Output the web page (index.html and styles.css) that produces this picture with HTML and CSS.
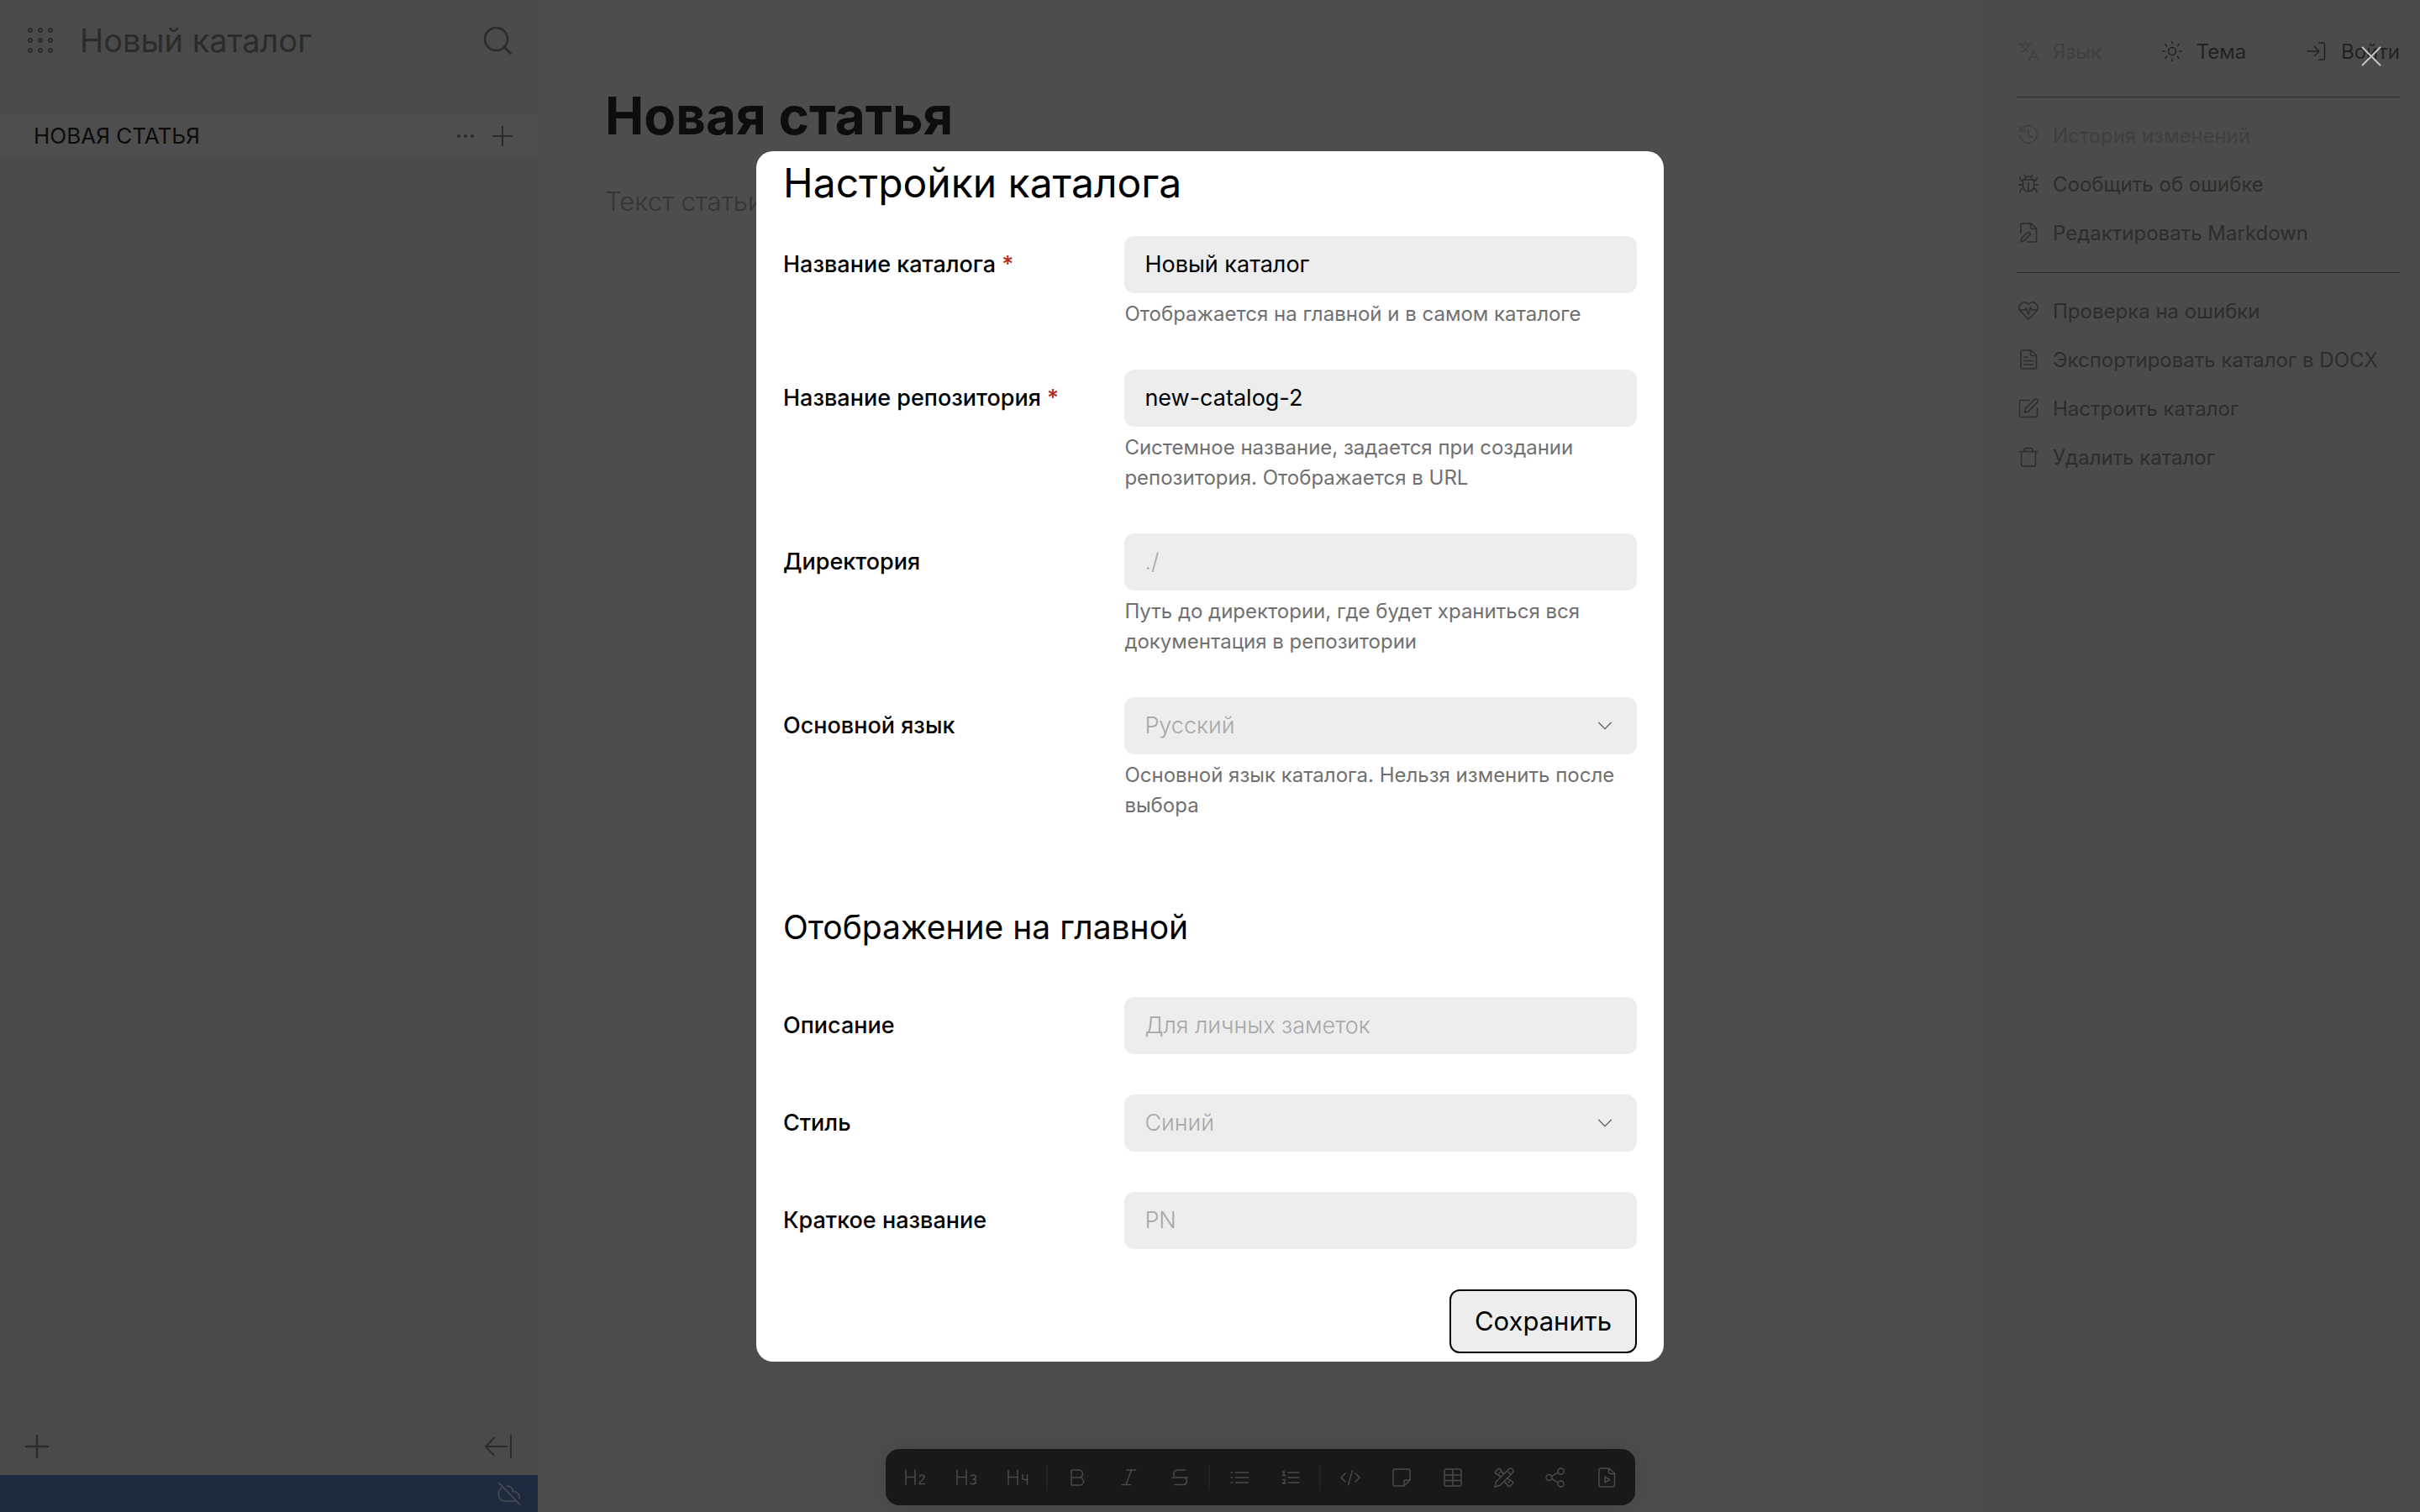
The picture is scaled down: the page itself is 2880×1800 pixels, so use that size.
FILE: index.html
```html
<!DOCTYPE html>
<html lang="ru">
<head>
<meta charset="utf-8">
<title>Новый каталог</title>
<link rel="stylesheet" href="styles.css">
</head>
<body>
<svg class="sprite" aria-hidden="true">
  <symbol id="i-lang" viewBox="0 0 24 24"><path d="M1 3.500h14.500M8 0.500v3M12.500 3.500C11 8 7 11.500 3.500 13M4.500 5c1.500 3 4 5.500 7 7.500M13 23l5.500-12L24 23M15 19h7.500"/></symbol>
  <symbol id="i-sun" viewBox="0 0 24 24"><circle cx="12" cy="12" r="4.500"/><path d="M12 .5v2.500M12 21v2.500M.5 12H3M21 12h2.500M3.900 3.900l1.700 1.700M18.400 18.400l1.700 1.700M3.900 20.100l1.700-1.700M18.400 5.600l1.700-1.700"/></symbol>
  <symbol id="i-login" viewBox="0 0 24 24"><path d="M.5 12H15M9.500 6.500 15 12l-5.500 5.500M14.500 2H20a1.500 1.500 0 0 1 1.500 1.500v17A1.500 1.500 0 0 1 20 22h-5.500"/></symbol>
  <symbol id="i-history" viewBox="0 0 24 24"><path d="M2 1.500v6h6M2.300 7.500A10.300 10.300 0 1 1 1.800 12M12 6.500V12l5 2.500"/></symbol>
  <symbol id="i-bug" viewBox="0 0 24 24"><path d="M5.500 7h13v7.500a6.500 6.500 0 0 1-13 0zM8 7a4 4 0 0 1 8 0M12 10.500V21M9 3.500 7 1M15 3.500 17 1M5.500 13H.5M18.500 13h5M5.500 8.500 3 7.500 1.500 4M18.500 8.500 21 7.500 22.500 4M6 17l-3 1.500L2 22M18 17l3 1.500 1 3.500"/></symbol>
  <symbol id="i-fileedit" viewBox="0 0 24 24"><path d="M3 13V3a2 2 0 0 1 2-2h10l6.500 6v14a2 2 0 0 1-2 2H11M14.500 1v4.500a2 2 0 0 0 2 2h5M3 23l.8-4.500 7-6.500a1.900 1.900 0 0 1 2.800 2.700l-6.500 6.800z"/></symbol>
  <symbol id="i-heart" viewBox="0 0 24 24"><path d="M12 22 2.500 12.500A6.300 6.300 0 0 1 12 4a6.300 6.300 0 0 1 9.500 8.500zM1.500 11H8l1.500-2 2.500 7 2.500-8 1.500 3h6.500"/></symbol>
  <symbol id="i-doc" viewBox="0 0 24 24"><path d="M3 3a2 2 0 0 1 2-2h10l6.500 6v14a2 2 0 0 1-2 2H5a2 2 0 0 1-2-2zM14.500 1v4.500a2 2 0 0 0 2 2h5M7 9h4M7 13.500h10.500M7 18h10.500"/></symbol>
  <symbol id="i-edit" viewBox="0 0 24 24"><path d="M13 2.500H3A1.500 1.500 0 0 0 1.500 4v17A1.500 1.500 0 0 0 3 22.500h18a1.500 1.500 0 0 0 1.500-1.500V12M7.500 17l.7-4.500L19 1.900a2.300 2.300 0 0 1 3.500 3.200L12 16z"/></symbol>
  <symbol id="i-trash" viewBox="0 0 24 24"><path d="M1.500 5.500h21M7 5.500V3.500A2 2 0 0 1 9 1.500h6a2 2 0 0 1 2 2v2M3.500 5.500V21a2 2 0 0 0 2 2h13a2 2 0 0 0 2-2V5.500"/></symbol>
  <symbol id="i-plus" viewBox="0 0 24 24"><path d="M12 .5v23M.5 12h23"/></symbol>
  <symbol id="i-x" viewBox="0 0 24 24"><path d="M1.500 1.500l21 21M22.500 1.500l-21 21"/></symbol>
  <symbol id="i-search" viewBox="0 0 34 34"><circle cx="15.500" cy="15.500" r="13.500"/><path d="M25 25l7.500 7.500"/></symbol>
  <symbol id="i-grid" viewBox="0 0 30 30"><circle cx="3" cy="3" r="2"/><circle cx="15" cy="3" r="2"/><circle cx="27" cy="3" r="2"/><circle cx="3" cy="15" r="2"/><circle cx="15" cy="15" r="2"/><circle cx="27" cy="15" r="2"/><circle cx="3" cy="27" r="2"/><circle cx="15" cy="27" r="2"/><circle cx="27" cy="27" r="2"/></symbol>
  <symbol id="i-dots" viewBox="0 0 24 24"><g class="solid"><circle cx="4" cy="12" r="2"/><circle cx="12" cy="12" r="2"/><circle cx="20" cy="12" r="2"/></g></symbol>
  <symbol id="i-collapse" viewBox="0 0 34 28"><path d="M27 14H2M12 3.500 2 14l10 10.500M32 1.500v25"/></symbol>
  <symbol id="i-cloudoff" viewBox="0 0 28 28"><path d="M1.500 1l25 26M5.500 6.500C2 9 1 13 1.500 16c.5 4 3 7 7 7H22M11.500 5c4 0 6.500 2.500 7 6.500 4 0 7.500 3 7.500 6.500v2"/></symbol>
  <symbol id="i-chev" viewBox="0 0 24 24"><path d="M4 8l8 8 8-8"/></symbol>
  <symbol id="i-h2" viewBox="0 0 26 24"><path d="M2 3v17M13 3v17M2 11.500h11M18.500 10.500q.3-1.500 2.800-1.500 2.700 0 2.700 2.500c0 3-5.500 4-6 8h6.500"/></symbol>
  <symbol id="i-h3" viewBox="0 0 26 24"><path d="M2 3v17M13 3v17M2 11.500h11M18.500 10q.5-1 2.700-1c4 0 3.500 5 0 5 4.500 0 4 5.700 0 5.700q-2.500 0-3.200-1"/></symbol>
  <symbol id="i-h4" viewBox="0 0 26 24"><path d="M2 3v17M13 3v17M2 11.500h11M19 8.500v4a2 2 0 0 0 2 2h4M24.500 8.500V20"/></symbol>
  <symbol id="i-bold" viewBox="0 0 24 24"><path d="M5 3h9a4.500 4.500 0 0 1 0 9H5zM5 12h10a4.500 4.500 0 0 1 0 9H5z"/></symbol>
  <symbol id="i-italic" viewBox="0 0 24 24"><path d="M10 3h10.500M4 20.500h10.500M15.500 3 9 20.500"/></symbol>
  <symbol id="i-strike" viewBox="0 0 24 24"><path d="M18.500 3H9.500a4.500 4.500 0 0 0-4 7M3 12h18.500M6 20.500h9.500a4.300 4.300 0 0 0 3.500-7.500"/></symbol>
  <symbol id="i-ul" viewBox="0 0 24 24"><path d="M7.500 6h15M7.500 12h15M7.500 18h15M2 6h1.500M2 12h1.500M2 18h1.500"/></symbol>
  <symbol id="i-ol" viewBox="0 0 24 24"><path d="M9 6h13M9 12h13M9 18h13M2.500 5.500 4 4.500v5M2.200 9.500h3.500M2.300 14.500q3-1 3 1T2.500 19h3.500"/></symbol>
  <symbol id="i-code" viewBox="0 0 24 24"><path d="M6 7l-5 5 5 5M18 7l5 5-5 5M14.500 3.500 9.500 20.500"/></symbol>
  <symbol id="i-note" viewBox="0 0 24 24"><path d="M15 22H4a2 2 0 0 1-2-2V4a2 2 0 0 1 2-2h16a2 2 0 0 1 2 2v11zM22 15h-5a2 2 0 0 0-2 2v5"/></symbol>
  <symbol id="i-table" viewBox="0 0 24 24"><path d="M4 2h16a2 2 0 0 1 2 2v16a2 2 0 0 1-2 2H4a2 2 0 0 1-2-2V4a2 2 0 0 1 2-2zM2 9h20M2 15.500h20M12 2v20"/></symbol>
  <symbol id="i-tools" viewBox="0 0 24 24"><path d="M1 23l1.500-6L17.500 2a2.900 2.900 0 0 1 4.500 4.500L7 21.500zM15.500 4l4.500 4.500M8.500 11 1.800 7a1.500 1.500 0 0 1 0-2L5 1.800a1.500 1.500 0 0 1 2 0l4.500 6.200M8 5 6 7M15.500 12.500l6.700 4.500a1.500 1.500 0 0 1 0 2L19 22.200a1.500 1.500 0 0 1-2 0L12 16M19.500 15.500l-2.500 2.500"/></symbol>
  <symbol id="i-share" viewBox="0 0 24 24"><circle cx="4.500" cy="12" r="3.500"/><circle cx="18.500" cy="4.500" r="3.500"/><circle cx="18.500" cy="19.500" r="3.500"/><path d="M7.600 10.300l7.800-4.100M7.600 13.700l7.800 4.100"/></symbol>
  <symbol id="i-video" viewBox="0 0 24 24"><path d="M3 3a2 2 0 0 1 2-2h10l6.500 6v14a2 2 0 0 1-2 2H5a2 2 0 0 1-2-2zM14.500 1v4.500a2 2 0 0 0 2 2h5M10 11v7l5.500-3.500z"/></symbol>
</svg>

<div class="app">
  <aside class="catalog">
    <header class="catalog-head">
      <button class="icon-btn" aria-label="Меню"><svg class="ic-grid"><use href="#i-grid"/></svg></button>
      <a class="catalog-name" href="#">Новый каталог</a>
      <button class="icon-btn" aria-label="Поиск"><svg class="ic-search"><use href="#i-search"/></svg></button>
    </header>
    <nav class="tree">
      <a class="tree-link" href="#">НОВАЯ СТАТЬЯ</a>
      <button class="icon-btn" aria-label="Действия"><svg class="ic"><use href="#i-dots"/></svg></button>
      <button class="icon-btn" aria-label="Добавить вложенную статью"><svg class="ic"><use href="#i-plus"/></svg></button>
    </nav>
    <div class="catalog-foot">
      <button class="icon-btn" aria-label="Добавить статью"><svg class="ic-add"><use href="#i-plus"/></svg></button>
      <button class="icon-btn" aria-label="Свернуть панель"><svg class="ic-collapse"><use href="#i-collapse"/></svg></button>
    </div>
    <div class="status"><svg class="ic-cloud"><use href="#i-cloudoff"/></svg></div>
  </aside>

  <main class="article">
    <h1 class="article-title">Новая статья</h1>
    <p class="article-text">Текст статьи</p>
    <div class="toolbar">
      <button class="tool" aria-label="Заголовок 2"><svg class="ic-h"><use href="#i-h2"/></svg></button>
      <button class="tool" aria-label="Заголовок 3"><svg class="ic-h"><use href="#i-h3"/></svg></button>
      <button class="tool" aria-label="Заголовок 4"><svg class="ic-h"><use href="#i-h4"/></svg></button>
      <span class="sep"></span>
      <button class="tool" aria-label="Полужирный"><svg class="ic"><use href="#i-bold"/></svg></button>
      <button class="tool" aria-label="Курсив"><svg class="ic"><use href="#i-italic"/></svg></button>
      <button class="tool" aria-label="Зачёркнутый"><svg class="ic"><use href="#i-strike"/></svg></button>
      <span class="sep"></span>
      <button class="tool" aria-label="Список"><svg class="ic"><use href="#i-ul"/></svg></button>
      <button class="tool" aria-label="Нумерованный список"><svg class="ic"><use href="#i-ol"/></svg></button>
      <span class="sep"></span>
      <button class="tool" aria-label="Код"><svg class="ic"><use href="#i-code"/></svg></button>
      <button class="tool" aria-label="Заметка"><svg class="ic"><use href="#i-note"/></svg></button>
      <button class="tool" aria-label="Таблица"><svg class="ic"><use href="#i-table"/></svg></button>
      <button class="tool" aria-label="Рисунок"><svg class="ic"><use href="#i-tools"/></svg></button>
      <button class="tool" aria-label="Диаграмма"><svg class="ic"><use href="#i-share"/></svg></button>
      <button class="tool" aria-label="Видео"><svg class="ic"><use href="#i-video"/></svg></button>
    </div>
  </main>

  <aside class="side">
    <div class="side-top">
      <button class="side-btn muted"><svg class="ic"><use href="#i-lang"/></svg>Язык</button>
      <button class="side-btn strong"><svg class="ic"><use href="#i-sun"/></svg>Тема</button>
      <button class="side-btn strong"><svg class="ic"><use href="#i-login"/></svg>Войти</button>
    </div>
    <div class="side-group">
      <button class="side-btn muted"><svg class="ic"><use href="#i-history"/></svg>История изменений</button>
      <button class="side-btn"><svg class="ic"><use href="#i-bug"/></svg>Сообщить об ошибке</button>
      <button class="side-btn"><svg class="ic"><use href="#i-fileedit"/></svg>Редактировать Markdown</button>
    </div>
    <div class="side-group">
      <button class="side-btn"><svg class="ic"><use href="#i-heart"/></svg>Проверка на ошибки</button>
      <button class="side-btn"><svg class="ic"><use href="#i-doc"/></svg>Экспортировать каталог в DOCX</button>
      <button class="side-btn"><svg class="ic"><use href="#i-edit"/></svg>Настроить каталог</button>
      <button class="side-btn"><svg class="ic"><use href="#i-trash"/></svg>Удалить каталог</button>
    </div>
  </aside>
</div>

<div class="overlay">
  <button class="close" aria-label="Закрыть"><svg class="ic"><use href="#i-x"/></svg></button>
  <form class="modal" role="dialog" aria-labelledby="modal-title">
    <h2 class="modal-title" id="modal-title">Настройки каталога</h2>
    <div class="fields">
      <div class="row">
        <label class="label" for="title">Название каталога <span class="req">*</span></label>
        <div class="control"><input class="input" id="title" type="text" value="Новый каталог">
          <p class="hint">Отображается на главной и в самом каталоге</p></div>
      </div>
      <div class="row">
        <label class="label" for="repo">Название репозитория <span class="req">*</span></label>
        <div class="control"><input class="input" id="repo" type="text" value="new-catalog-2">
          <p class="hint">Системное название, задается при создании репозитория. Отображается в URL</p></div>
      </div>
      <div class="row">
        <label class="label" for="dir">Директория</label>
        <div class="control"><input class="input" id="dir" type="text" placeholder="./">
          <p class="hint">Путь до директории, где будет храниться вся документация в репозитории</p></div>
      </div>
      <div class="row">
        <label class="label" for="lang">Основной язык</label>
        <div class="control"><div class="select-box"><select class="input select" id="lang" disabled><option>Русский</option></select><svg class="chev"><use href="#i-chev"/></svg></div>
          <p class="hint">Основной язык каталога. Нельзя изменить после выбора</p></div>
      </div>
    </div>
    <h3 class="modal-subtitle">Отображение на главной</h3>
    <div class="fields">
      <div class="row">
        <label class="label" for="desc">Описание</label>
        <div class="control"><input class="input" id="desc" type="text" placeholder="Для личных заметок"></div>
      </div>
      <div class="row">
        <label class="label" for="style">Стиль</label>
        <div class="control"><div class="select-box"><select class="input select" id="style"><option>Синий</option></select><svg class="chev"><use href="#i-chev"/></svg></div></div>
      </div>
      <div class="row">
        <label class="label" for="short">Краткое название</label>
        <div class="control"><input class="input" id="short" type="text" placeholder="PN"></div>
      </div>
    </div>
    <div class="actions"><button class="save" type="button">Сохранить</button></div>
  </form>
</div>
</body>
</html>
```
FILE: styles.css
```css
* { box-sizing: border-box; }

body {
  margin: 0;
  font-family: Inter, "Noto Sans", sans-serif;
  color: #000;
  background: #4d4d4d;
}

h1, h2, h3, p { margin: 0; }
a { color: inherit; text-decoration: none; }

button {
  padding: 0;
  border: 0;
  background: none;
  color: inherit;
  font: inherit;
}

svg {
  display: block;
  flex: none;
  fill: none;
  stroke: currentColor;
  stroke-width: 1.5;
  stroke-linecap: round;
  stroke-linejoin: round;
}

.sprite { display: none; }
.solid { fill: currentColor; stroke: none; }
.ic { width: 24px; height: 24px; }
.icon-btn { display: flex; align-items: center; }

.app {
  display: grid;
  grid-template-columns: 640px 1fr 520px;
  min-height: 100vh;
}

/* Catalog panel */
.catalog {
  display: flex;
  flex-direction: column;
  background: #4a4a4a;
  color: #2b2b2b;
}

.catalog-head {
  display: flex;
  align-items: center;
  height: 96px;
  margin-bottom: 40px;
  padding: 0 31px 0 33px;
}

.catalog-name {
  flex: 1;
  margin-left: 32px;
  font-size: 38px;
}

.ic-grid { width: 30px; height: 30px; stroke-width: 2; }
.ic-search { width: 34px; height: 34px; stroke-width: 2.5; }

.tree {
  display: flex;
  align-items: center;
  gap: 20px;
  height: 51px;
  padding: 0 30px 0 40px;
  background: #4e4e4e;
}

.tree .ic { stroke-width: 2; }

.tree-link {
  flex: 1;
  color: #0c0c0c;
  font-size: 26px;
}

.catalog-foot {
  display: flex;
  align-items: center;
  justify-content: space-between;
  height: 68px;
  margin-top: auto;
  padding: 0 30px;
}

.ic-add { width: 28px; height: 28px; stroke-width: 2; }
.ic-collapse { width: 34px; height: 28px; stroke-width: 2; }

.status {
  display: flex;
  align-items: center;
  justify-content: flex-end;
  height: 44px;
  padding: 0 20px;
  background: #1c2b40;
  color: #4d4d4d;
}

.ic-cloud { width: 28px; height: 28px; }

/* Article */
.article {
  display: flex;
  flex-direction: column;
  align-items: center;
  padding: 98px 80px 8px;
  background: #4d4d4d;
}

.article-title {
  align-self: stretch;
  color: #0d0d0d;
  font-size: 62px;
  font-weight: 700;
  line-height: 80px;
}

.article-text {
  align-self: stretch;
  margin-top: 40px;
  color: #353535;
  font-size: 31px;
  font-weight: 300;
  line-height: 44px;
}

.toolbar {
  display: flex;
  align-items: center;
  height: 67px;
  margin-top: auto;
  padding: 0 4px;
  border-radius: 16px;
  background: #191919;
  color: #4a4a4a;
  box-shadow: 0 0 32px rgba(0, 0, 0, .12);
}

.tool {
  display: flex;
  justify-content: center;
  width: 61px;
}

.ic-h { width: 26px; height: 24px; }

.sep {
  width: 2px;
  height: 30px;
  margin: 0 4px;
  background: #222;
}

/* Right panel */
.side {
  padding: 20px 24px 20px 40px;
  background: #4b4b4b;
  color: #2d2d2d;
}

.side-top {
  display: flex;
  justify-content: space-between;
  margin-bottom: 13px;
  padding: 12px 0;
}

.side-group {
  display: flex;
  flex-direction: column;
  align-items: flex-start;
  border-top: 1px solid #303030;
  padding: 16px 0 18px;
}

.side-btn {
  display: flex;
  align-items: center;
  gap: 17px;
  height: 58px;
  padding-left: 2px;
  font-size: 24px;
  white-space: nowrap;
}

.strong { color: #222; }
.muted { color: #3f3f3f; }

/* Settings dialog */
.overlay {
  position: absolute;
  inset: 0;
  display: flex;
  align-items: center;
  justify-content: center;
}

.close {
  position: absolute;
  top: 55px;
  right: 46px;
  color: #c4c4c4;
}

.close .ic { stroke-width: 2; }

.modal {
  display: flex;
  flex-direction: column;
  width: 1080px;
  min-height: 80vh;
  padding: 8px 32px 10px;
  border-radius: 20px;
  background: #fff;
}

.modal-title {
  font-size: 48px;
  font-weight: 400;
  line-height: 60px;
  margin-bottom: 33px;
}

.modal-subtitle {
  margin: 100px 0 56px;
  font-size: 39px;
  font-weight: 400;
  line-height: 54px;
}

.fields {
  display: flex;
  flex-direction: column;
  gap: 48px;
}

.row {
  display: grid;
  grid-template-columns: 2fr 3fr;
}

.label {
  font-size: 27px;
  font-weight: 500;
  line-height: 68px;
}

.req { color: #b22a22; }

.input {
  display: block;
  width: 100%;
  height: 68px;
  padding: 0 24px;
  border: 0;
  border-radius: 12px;
  background: #ededed;
  color: #000;
  font-family: inherit;
  font-size: 27px;
}

.input::placeholder {
  color: #a8a8a8;
  font-weight: 300;
  opacity: 1;
}

.select {
  appearance: none;
  color: #a8a8a8;
  font-weight: 300;
  opacity: 1;
}

.select-box { display: grid; align-items: center; }
.select-box > * { grid-area: 1 / 1; }

.chev {
  justify-self: end;
  width: 22px;
  height: 22px;
  margin-right: 27px;
  color: #666;
  pointer-events: none;
}

.hint {
  margin-top: 7px;
  color: #707070;
  font-size: 24px;
  line-height: 36px;
}

.actions {
  display: flex;
  justify-content: flex-end;
  margin-top: 48px;
}

.save {
  height: 76px;
  padding: 0 28px;
  border: 2px solid #000;
  border-radius: 12px;
  background: #ededed;
  font-size: 31px;
}
```
